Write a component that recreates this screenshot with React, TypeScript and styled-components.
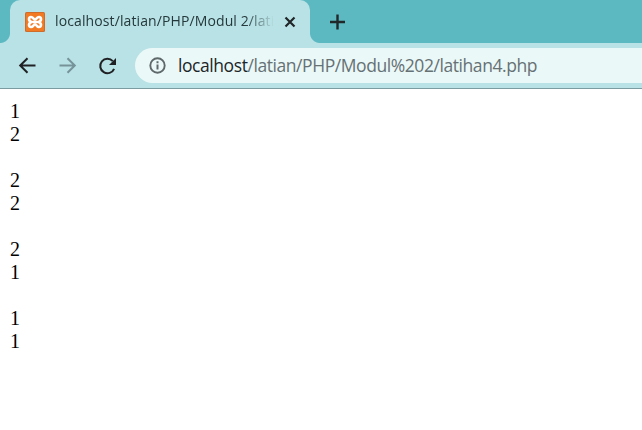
import React from "react";
import styled, { createGlobalStyle } from "styled-components";

const GlobalStyle = createGlobalStyle`
  body {
    margin: 0;
    background: #fff;
    overflow: hidden;
  }
`;

const Browser = styled.div`
  display: flex;
  flex-direction: column;
  width: 100%;
  height: 430px;
  overflow: hidden;
  background: #fff;
`;

const TabStrip = styled.div`
  display: flex;
  align-items: stretch;
  height: 43px;
  flex: none;
  background: #5cb8c1;
`;

const TabFlare = styled.div<{ $side: "left" | "right" }>`
  width: 10px;
  background: radial-gradient(
    circle at ${(p) => (p.$side === "left" ? "0" : "10px")} 33px,
    #5cb8c1 9.5px,
    #b8e2e5 10.5px
  );
  clip-path: inset(33px 0 0 0);
`;

const Tab = styled.div`
  display: flex;
  align-items: center;
  box-sizing: border-box;
  width: 300px;
  padding-left: 15px;
  border-radius: 10px 10px 0 0;
  background: #b8e2e5;
`;

const Favicon = styled.svg`
  flex: none;
  width: 20px;
  height: 20px;
  margin-right: 10px;
`;

const TabTitle = styled.div`
  width: 219px;
  overflow: hidden;
  white-space: nowrap;
  font: 14px/24px "Open Sans", sans-serif;
  letter-spacing: 0.11px;
  margin-top: -2px;
  color: #25383b;
  mask-image: linear-gradient(to right, #000 190px, transparent 219px);
`;

const CloseIcon = styled.svg`
  flex: none;
  width: 12px;
  height: 12px;
  margin-left: 10px;
`;

const NewTabIcon = styled.svg`
  align-self: center;
  width: 16px;
  height: 16px;
  margin-left: 9px;
`;

const Toolbar = styled.div`
  display: flex;
  align-items: center;
  box-sizing: border-box;
  flex: none;
  height: 46px;
  padding-left: 17px;
  background: #b8e2e5;
  border-bottom: 1px solid #7b9da2;
`;

const NavIcon = styled.svg`
  flex: none;
  width: 20px;
  height: 20px;
  margin-right: 20px;
`;

const AddressBar = styled.div`
  display: flex;
  align-items: center;
  box-sizing: border-box;
  flex: 1;
  height: 35px;
  margin-left: -2px;
  padding-left: 14px;
  border-radius: 18px 0 0 18px;
  background: #ebf8f8;
`;

const InfoIcon = styled.svg`
  flex: none;
  width: 17px;
  height: 17px;
  margin-right: 12px;
`;

const Url = styled.div`
  white-space: nowrap;
  font: 17.5px/30px "Open Sans", sans-serif;
  letter-spacing: -0.43px;
  margin-top: -2px;
  color: #657174;
`;

const Host = styled.span`
  color: #1c2628;
`;

const Page = styled.main`
  padding: 11px 10px;
  font: 20px/23px "Liberation Serif", serif;
  color: #000;
`;

const Group = styled.div`
  margin-bottom: 23px;
`;

const results = [
  [1, 2],
  [2, 2],
  [2, 1],
  [1, 1],
];

export default function App() {
  return (
    <Browser>
      <GlobalStyle />
      <TabStrip>
        <TabFlare $side="left" />
        <Tab>
          <Favicon viewBox="0 0 20 20">
            <rect width="20" height="20" rx="1.5" fill="#ce6c2b" />
            <rect x="1" y="1" width="18" height="18" rx="1" fill="#f17a23" />
            <path
              d="M7.500 10H12.500M6.500 10C3.200 9 3.300 5 6 5C8.500 5 8 7.500 10 7.500C12 7.500 11.500 5 14 5C16.700 5 16.800 9 13.500 10C16.800 11 16.700 15 14 15C11.500 15 12 12.500 10 12.500C8 12.500 8.500 15 6 15C3.300 15 3.200 11 6.500 10Z"
              fill="none"
              stroke="#fff"
              strokeWidth="2.6"
              strokeLinejoin="round"
            />
          </Favicon>
          <TabTitle>localhost/latian/PHP/Modul 2/latihan4.php</TabTitle>
          <CloseIcon viewBox="0 0 12 12">
            <path d="M1.500 1.500L10.500 10.500M10.500 1.500L1.500 10.500" stroke="#202628" strokeWidth="2.2" />
          </CloseIcon>
        </Tab>
        <TabFlare $side="right" />
        <NewTabIcon viewBox="0 0 16 16">
          <path d="M8.500 .5V15.500M1 8H16" stroke="#20282a" strokeWidth="2.400" />
        </NewTabIcon>
      </TabStrip>
      <Toolbar>
        <NavIcon viewBox="0 0 20 20" fill="none" stroke="#202124" strokeWidth="2">
          <path d="M18.500 9.500H3.500M10.500 2.200L3.200 9.500L10.500 16.800" />
        </NavIcon>
        <NavIcon viewBox="0 0 20 20" fill="none" stroke="#76939a" strokeWidth="2">
          <path d="M2.500 9.500H17.500M10.500 2.200L17.800 9.500L10.500 16.800" />
        </NavIcon>
        <NavIcon viewBox="0 0 20 20">
          <path d="M17.100 12.800A7.200 7.200 0 1 1 15.800 5.200" fill="none" stroke="#202124" strokeWidth="2" />
          <path d="M19 2V9H12Z" fill="#202124" />
        </NavIcon>
        <AddressBar>
          <InfoIcon viewBox="0 0 17 17">
            <circle cx="8.500" cy="8.500" r="7.200" fill="none" stroke="#5f686b" strokeWidth="1.900" />
            <path d="M8.500 7.500V12.500M8.500 4.300V6.200" stroke="#5f686b" strokeWidth="2" />
          </InfoIcon>
          <Url>
            <Host>localhost</Host>/latian/PHP/Modul%202/latihan4.php
          </Url>
        </AddressBar>
      </Toolbar>
      <Page>
        {results.map((group, i) => (
          <Group key={i}>
            {group.map((value, j) => (
              <div key={j}>{value}</div>
            ))}
          </Group>
        ))}
      </Page>
    </Browser>
  );
}
